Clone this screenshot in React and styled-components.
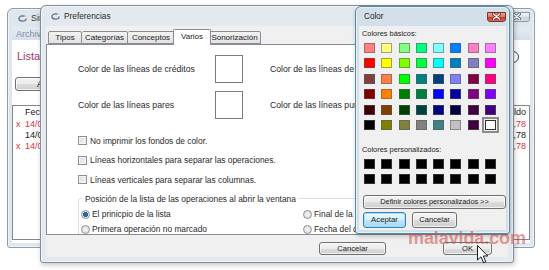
import React from "react";
import styled, { createGlobalStyle } from "styled-components";

const Global = createGlobalStyle`
  html, body { margin: 0; padding: 0; background: #ffffff; }
  body {
    width: 549px; height: 270px; overflow: hidden;
    font-family: "Liberation Sans", Arial, sans-serif;
    color: #1e1e1e;
  }
  * { box-sizing: border-box; }
`;

const Desktop = styled.div`
  position: relative;
  width: 549px;
  height: 270px;
  overflow: hidden;
  background: #ffffff;
`;

const Window = styled.div`
  position: absolute;
  left: ${(p) => p.$x}px;
  top: ${(p) => p.$y}px;
  width: ${(p) => p.$w}px;
  height: ${(p) => p.$h}px;
  display: flex;
  flex-direction: column;
  padding: 0 ${(p) => p.$side}px ${(p) => p.$side}px;
  background: ${(p) => p.$frame};
  border: 1px solid ${(p) => p.$edge};
  border-radius: 6px 6px 3px 3px;
  box-shadow: inset 0 0 0 1px rgba(255, 255, 255, 0.55),
    ${(p) => (p.$shadow ? "1px 2px 5px rgba(0,0,0,0.22)" : "0 0 0 transparent")};
`;

const TitleBar = styled.div`
  height: ${(p) => p.$h}px;
  flex: none;
  display: flex;
  align-items: center;
  gap: 4px;
  padding-left: ${(p) => p.$pad}px;
`;

const TitleText = styled.span`
  font-size: ${(p) => p.$size}px;
  color: ${(p) => p.$color || "#2a2a2a"};
  white-space: nowrap;
`;

const CloseBox = styled.div`
  margin-left: auto;
  margin-top: ${(p) => p.$mt || 0}px;
  width: ${(p) => p.$w}px;
  height: ${(p) => p.$h}px;
  border-radius: 0 0 3px 3px;
  border: 1px solid ${(p) => (p.$red ? "#7d332b" : "#8b98a6")};
  background: ${(p) =>
    p.$red
      ? "linear-gradient(#e8a695 0%, #d67a66 45%, #c2402f 55%, #d56a4f 100%)"
      : "linear-gradient(#f2f5f8 0%, #dde4ea 45%, #c9d2db 55%, #d9e0e7 100%)"};
  display: flex;
  align-items: center;
  justify-content: center;
  flex: none;
`;

const AppIcon = () => (
  <svg width="9" height="7" viewBox="0 0 9 7">
    <ellipse cx="4.5" cy="3.5" rx="3.6" ry="2.6" fill="none" stroke="#5b6f84" strokeWidth="1.2" />
    <path d="M6.5 1.5 L8.6 3.2" stroke="#ffffff" strokeWidth="1.6" />
  </svg>
);

const CloseGlyph = ({ color, outline }) => (
  <svg width="9" height="7" viewBox="0 0 9 7">
    <path d="M1.5 1 L7.5 6 M7.5 1 L1.5 6" stroke={outline} strokeWidth="3" strokeLinecap="round" />
    <path d="M1.5 1 L7.5 6 M7.5 1 L1.5 6" stroke={color} strokeWidth="1.4" strokeLinecap="round" />
  </svg>
);

/* ---------- background window ---------- */

const MenuBar = styled.div`
  height: 13px;
  flex: none;
  display: flex;
  align-items: center;
  padding-left: 4px;
  background: linear-gradient(#e4ebf3, #d6e0ea);
  font-size: 9px;
  color: #7d8ea2;
`;

const BackBody = styled.div`
  flex: 1;
  display: flex;
  flex-direction: column;
  background: #ffffff;
  padding: 9px 0 3px 0;
`;

const ListaRow = styled.div`
  height: 14px;
  display: flex;
  align-items: center;
  justify-content: space-between;
  padding: 0 10px 0 5px;
  font-size: 11px;
  color: #a4386a;
`;

const ToolRow = styled.div`
  margin-top: 14px;
  height: 14px;
  display: flex;
  padding-left: 3px;
`;

const PushButton = styled.div`
  width: ${(p) => p.$w}px;
  height: ${(p) => p.$h}px;
  border: 1px solid ${(p) => (p.$default ? "#3c7fb1" : "#707070")};
  border-radius: 3px;
  background: ${(p) =>
    p.$default
      ? "linear-gradient(#eaf6fd 0%, #d9f0fc 50%, #bee6fd 51%, #a7d9f5 100%)"
      : "linear-gradient(#f3f3f3 0%, #ebebeb 50%, #dddddd 51%, #cfcfcf 100%)"};
  box-shadow: inset 0 0 0 1px ${(p) => (p.$default ? "#9fe0fb" : "rgba(255,255,255,0.7)")};
  display: flex;
  align-items: center;
  justify-content: center;
  font-size: ${(p) => p.$size}px;
  color: #1b1b1b;
  white-space: nowrap;
  flex: none;
`;

const ListBox = styled.div`
  margin-top: 14px;
  flex: 1;
  border: 1px solid #828790;
  display: flex;
  flex-direction: column;
  background: #fff;
`;

const ListHeader = styled.div`
  height: 12px;
  display: flex;
  align-items: center;
  justify-content: space-between;
  padding: 0 3px 0 12px;
  font-size: 9px;
  color: #222;
`;

const ListRow = styled.div`
  height: 11px;
  display: flex;
  align-items: center;
  font-size: 9px;
  color: ${(p) => (p.$red ? "#e0303c" : "#161616")};
  padding-right: 3px;
`;

const Mark = styled.span`
  width: 12px;
  padding-left: 3px;
  flex: none;
  color: #e0303c;
`;

const Amount = styled.span`
  margin-left: auto;
`;

const ClockIcon = () => (
  <svg width="14" height="14" viewBox="0 0 14 14">
    <circle cx="7" cy="8" r="5.5" fill="#fff" stroke="#444" strokeWidth="1" />
  </svg>
);

/* ---------- Preferencias ---------- */

const PrefClient = styled.div`
  flex: 1;
  display: flex;
  flex-direction: column;
  background: #f0f0f0;
`;

const TabStrip = styled.div`
  height: 18px;
  flex: none;
  display: flex;
  align-items: flex-end;
  padding-left: 2px;
  position: relative;
  z-index: 1;
`;

const Tab = styled.div`
  width: ${(p) => p.$w}px;
  height: ${(p) => (p.$active ? 16 : 13)}px;
  margin: 0 ${(p) => (p.$active ? -2 : 0)}px ${(p) => (p.$active ? -1 : 0)}px;
  border: 1px solid #898c95;
  border-bottom: ${(p) => (p.$active ? "none" : "1px solid #898c95")};
  border-left: ${(p) => (p.$first || p.$active ? "1px solid #898c95" : "none")};
  border-radius: 2px 2px 0 0;
  background: ${(p) => (p.$active ? "#ffffff" : "linear-gradient(#f2f2f2, #e3e3e3)")};
  position: relative;
  z-index: ${(p) => (p.$active ? 2 : 0)};
  display: flex;
  align-items: center;
  justify-content: center;
  padding-bottom: ${(p) => (p.$active ? 2 : 0)}px;
  font-size: 8px;
  color: #1c1c1c;
  white-space: nowrap;
  overflow: hidden;
`;

const TabPanel = styled.div`
  height: 191px;
  flex: none;
  border: 1px solid #898c95;
  background: #ffffff;
  overflow: hidden;
  padding: 10px 0 0 31px;
  display: flex;
  flex-direction: column;
`;

const ColorGrid = styled.div`
  display: grid;
  grid-template-columns: 137px 28px 27px auto;
  grid-auto-rows: 28px;
  row-gap: 8px;
  align-items: center;
`;

const PanelText = styled.span`
  font-size: ${(p) => p.$size || 8.4}px;
  color: #2a2a2a;
  white-space: nowrap;
`;

const SwatchBox = styled.div`
  width: 28px;
  height: 28px;
  border: 1px solid #7c7c7c;
  background: #ffffff;
`;

const CheckList = styled.div`
  margin-top: 12px;
  display: flex;
  flex-direction: column;
`;

const CheckRow = styled.div`
  height: 19.5px;
  display: flex;
  align-items: center;
  gap: 3px;
`;

const CheckBox = styled.span`
  width: 9px;
  height: 9px;
  flex: none;
  border: 1px solid #8f8f8f;
  background: linear-gradient(135deg, #dcdcdc, #f6f6f6);
  box-shadow: inset 0 0 0 1px #f4f4f4;
`;

const GroupBox = styled.fieldset`
  margin: 4px 0 0 0;
  width: 420px;
  height: 60px;
  padding: 3px 0 0 2px;
  border: 1px solid #d5dfe5;
  border-radius: 3px;
  display: grid;
  grid-template-columns: 222px auto;
  grid-auto-rows: 15px;
  align-items: center;
`;

const Legend = styled.legend`
  margin-left: 2px;
  padding: 0 2px;
  font-size: 8.4px;
  line-height: 10px;
  color: #2a2a2a;
  white-space: nowrap;
`;

const RadioRow = styled.div`
  display: flex;
  align-items: center;
  gap: 2px;
`;

const Radio = styled.span`
  width: 9px;
  height: 9px;
  flex: none;
  border-radius: 50%;
  border: 1px solid #8f8f8f;
  background: ${(p) =>
    p.$on
      ? "radial-gradient(circle, #2a6aa8 0 2px, #1c4c7c 2.4px, #e8e8e8 2.6px, #f7f7f7 100%)"
      : "radial-gradient(circle, #f4f4f4 0, #dadada 100%)"};
`;

const ButtonRow = styled.div`
  flex: 1;
  display: flex;
  align-items: flex-start;
  gap: 57px;
  padding: 7px 0 0 273px;
`;

/* ---------- Color dialog ---------- */

const ColorClient = styled.div`
  flex: 1;
  display: flex;
  flex-direction: column;
  background: #f0f0f0;
  padding: 3px 0 0 3px;
`;

const SmallLabel = styled.div`
  font-size: 7.4px;
  line-height: 9px;
  color: #222;
  white-space: nowrap;
  margin-top: ${(p) => p.$mt || 0}px;
`;

const Palette = styled.div`
  margin-top: ${(p) => p.$mt}px;
  padding-left: 2px;
  display: grid;
  grid-template-columns: repeat(8, 11px);
  grid-auto-rows: 10px;
  column-gap: 6.3px;
  row-gap: ${(p) => p.$rg}px;
`;

const Chip = styled.div`
  background: ${(p) => p.$c};
  border: 1px solid ${(p) => (p.$sel ? "#303030" : "rgba(90,90,90,0.55)")};
  outline: ${(p) => (p.$sel ? "2px solid #8c8c8c" : "none")};
  outline-offset: 1px;
`;

const ColorButtons = styled.div`
  display: flex;
  flex-direction: column;
  gap: 3px;
  margin-top: 11px;
  padding-left: 1px;
`;

const ButtonPair = styled.div`
  display: flex;
  gap: 6px;
`;

const Watermark = styled.div`
  position: absolute;
  left: 408px;
  top: 228px;
  font-family: "Liberation Sans", Arial, sans-serif;
  font-weight: bold;
  font-size: 18px;
  line-height: 20px;
  color: rgba(208, 70, 65, 0.55);
  letter-spacing: -0.1px;
  pointer-events: none;
`;

const Cursor = styled.svg`
  position: absolute;
  left: 477px;
  top: 245px;
`;

const BASIC = [
  ["#FF8080", "#FFFF80", "#80FF80", "#00FF80", "#80FFFF", "#0080FF", "#FF80C0", "#FF80FF"],
  ["#FF0000", "#FFFF00", "#80FF00", "#00FF40", "#00FFFF", "#0080C0", "#8080C0", "#FF00FF"],
  ["#804040", "#FF8040", "#00FF00", "#008080", "#004080", "#8080FF", "#800040", "#FF0080"],
  ["#800000", "#FF8000", "#008000", "#008040", "#0000FF", "#0000A0", "#800080", "#8000FF"],
  ["#400000", "#804000", "#004000", "#004040", "#000080", "#000040", "#400040", "#400080"],
  ["#000000", "#808000", "#808040", "#808080", "#408080", "#C0C0C0", "#400040", "#FFFFFF"],
];

const TABS = [
  { t: "Tipos", w: 34 },
  { t: "Categorías", w: 46 },
  { t: "Conceptos", w: 47 },
  { t: "Varios", w: 38, active: true },
  { t: "Sonorización", w: 52 },
];

const ROWS = [
  { red: true, d: "14/03/2009", a: "1.254,78" },
  { red: false, d: "14/03/2009", a: "1.254,78" },
  { red: true, d: "14/03/2009", a: "1.254,78" },
];

export default function App() {
  return (
    <Desktop>
      <Global />

      {/* Main window behind */}
      <Window $x={7} $y={8} $w={528} $h={240} $side={4} $frame="#dfe6ed" $edge="#8e9baa">
        <TitleBar $h={18} $pad={6}>
          <AppIcon />
          <TitleText $size={9} $color="#3b3b3b">Sin título</TitleText>
          <CloseBox $w={28} $h={10} $mt={-3}>
            <CloseGlyph color="#ffffff" outline="#5d6b79" />
          </CloseBox>
        </TitleBar>
        <MenuBar>
          <span>Archivo</span>
        </MenuBar>
        <BackBody>
          <ListaRow>
            <span>Lista</span>
            <ClockIcon />
          </ListaRow>
          <ToolRow>
            <PushButton $w={70} $h={14} $size={9}>Añadir</PushButton>
          </ToolRow>
          <ListBox>
            <ListHeader>
              <span>Fecha</span>
              <span>Saldo</span>
            </ListHeader>
            {ROWS.map((r, i) => (
              <ListRow key={i} $red={r.red}>
                <Mark>{r.red ? "x" : ""}</Mark>
                <span>{r.d}</span>
                <Amount>{r.a}</Amount>
              </ListRow>
            ))}
          </ListBox>
        </BackBody>
      </Window>

      {/* Preferencias dialog */}
      <Window $x={40} $y={5} $w={474} $h={258} $side={5} $frame="#e3e9ef" $edge="#7f8d9c" $shadow>
        <TitleBar $h={20} $pad={5}>
          <AppIcon />
          <TitleText $size={8.3} $color="#2b2b2b">Preferencias</TitleText>
        </TitleBar>
        <PrefClient>
          <TabStrip>
            {TABS.map((t, i) => (
              <Tab key={t.t} $w={t.w} $active={t.active} $first={i === 0}>
                {t.t}
              </Tab>
            ))}
          </TabStrip>
          <TabPanel>
            <ColorGrid>
              <PanelText $size={8.7}>Color de las líneas de créditos</PanelText>
              <SwatchBox />
              <span />
              <PanelText $size={8.7}>Color de las líneas de débitos</PanelText>
              <PanelText $size={8.7}>Color de las líneas pares</PanelText>
              <SwatchBox />
              <span />
              <PanelText $size={8.7}>Color de las líneas punteadas</PanelText>
            </ColorGrid>
            <CheckList>
              <CheckRow>
                <CheckBox />
                <PanelText>No imprimir los fondos de color.</PanelText>
              </CheckRow>
              <CheckRow>
                <CheckBox />
                <PanelText>Líneas horizontales para separar las operaciones.</PanelText>
              </CheckRow>
              <CheckRow>
                <CheckBox />
                <PanelText>Líneas verticales para separar las columnas.</PanelText>
              </CheckRow>
            </CheckList>
            <GroupBox>
              <Legend>Posición de la lista de las operaciones al abrir la ventana</Legend>
              <RadioRow>
                <Radio $on />
                <PanelText>El prinicpio de la lista</PanelText>
              </RadioRow>
              <RadioRow>
                <Radio />
                <PanelText>Final de la lista</PanelText>
              </RadioRow>
              <RadioRow>
                <Radio />
                <PanelText>Primera operación no marcado</PanelText>
              </RadioRow>
              <RadioRow>
                <Radio />
                <PanelText>Fecha del día</PanelText>
              </RadioRow>
            </GroupBox>
          </TabPanel>
          <ButtonRow>
            <PushButton $w={67} $h={13} $size={7.6}>Cancelar</PushButton>
            <PushButton $w={49} $h={13} $size={7.6}>OK</PushButton>
          </ButtonRow>
        </PrefClient>
      </Window>

      {/* Color dialog */}
      <Window $x={355} $y={6} $w={155} $h={228} $side={3} $frame="#d3dfe9" $edge="#4f8aa3" $shadow>
        <TitleBar $h={19} $pad={5}>
          <TitleText $size={8.2} $color="#1f1f1f">Color</TitleText>
          <CloseBox $w={19} $h={10} $red>
            <CloseGlyph color="#ffffff" outline="#8a2a22" />
          </CloseBox>
        </TitleBar>
        <ColorClient>
          <SmallLabel>Colores básicos:</SmallLabel>
          <Palette $mt={5} $rg={5.4}>
            {BASIC.flat().map((c, i) => (
              <Chip key={i} $c={c} $sel={i === 47} />
            ))}
          </Palette>
          <SmallLabel $mt={15.5}>Colores personalizados:</SmallLabel>
          <Palette $mt={4.5} $rg={5}>
            {Array.from({ length: 16 }).map((_, i) => (
              <Chip key={i} $c="#000000" />
            ))}
          </Palette>
          <ColorButtons>
            <PushButton $w={143} $h={14} $size={7.3}>Definir colores personalizados &gt;&gt;</PushButton>
            <ButtonPair>
              <PushButton $w={43} $h={16} $size={7.8} $default>Aceptar</PushButton>
              <PushButton $w={45} $h={16} $size={7.6}>Cancelar</PushButton>
            </ButtonPair>
          </ColorButtons>
        </ColorClient>
      </Window>

      <Watermark>malavida.com</Watermark>

      <Cursor width="12" height="20" viewBox="0 0 12 20">
        <path
          d="M0.5 0.5 L0.5 15 L4 11.8 L6.6 17.8 L8.8 16.8 L6.3 11 L10.8 11 Z"
          fill="#ffffff"
          stroke="#1a1a1a"
          strokeWidth="1"
          strokeLinejoin="round"
        />
      </Cursor>
    </Desktop>
  );
}
